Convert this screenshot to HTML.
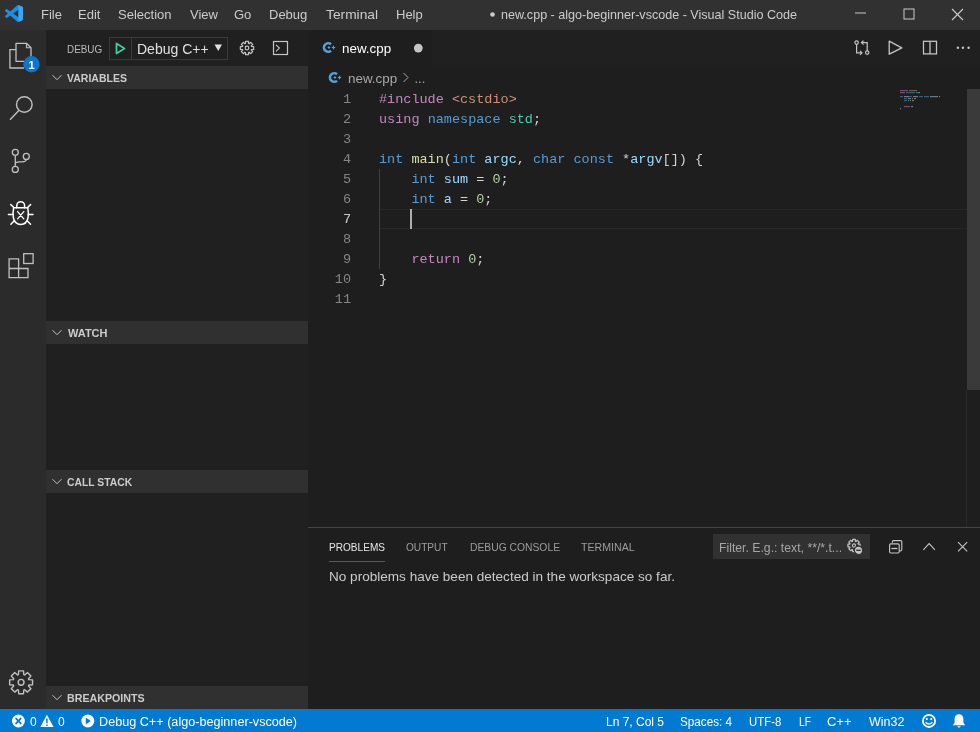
<!DOCTYPE html>
<html><head><meta charset="utf-8">
<style>
*{box-sizing:border-box;margin:0;padding:0}
html,body{width:980px;height:732px;overflow:hidden;background:#1e1e1e;font-family:"Liberation Sans",sans-serif;}
.a{position:absolute}
.t{position:absolute;white-space:pre;line-height:1;transform-origin:0 0}
svg{position:absolute;overflow:visible}
#title{left:0;top:0;width:980px;height:30px;background:#313131;}
.menu{top:8px;font-size:13px;color:#cccccc}
#act{left:0;top:30px;width:46px;height:679px;background:#2b2b2b}
#side{left:46px;top:30px;width:262px;height:679px;background:#202020}
.sechd{position:absolute;left:46px;width:262px;height:23px;background:#303030;}
.sechd .t{left:21px;top:6.5px;font-size:11px;font-weight:bold;color:#cccccc}
#tabs{left:308px;top:30px;width:672px;height:35px;background:#202020}
#tab{left:308px;top:30px;width:124px;height:35px;background:#1e1e1e}
#status{left:0;top:709px;width:980px;height:23px;background:#027ad2}
.st{top:716px;font-size:12px;color:#ffffff}
.code{position:absolute;left:379px;font-family:"Liberation Mono",monospace;font-size:13.5px;line-height:20px;white-space:pre;color:#d4d4d4}
.ln{position:absolute;left:320px;width:31px;text-align:right;font-family:"Liberation Mono",monospace;font-size:13.5px;line-height:20px;color:#858585}
.kw{color:#569cd6}.pp{color:#c586c0}.str{color:#ce9178}.ty{color:#4ec9b0}.fn{color:#dcdcaa}.var{color:#9cdcfe}.num{color:#b5cea8}
.ptab{top:542px;font-size:11px;color:#9d9d9d}
</style></head><body><div style="position:absolute;left:0;top:0;width:980px;height:732px;will-change:transform">
<!-- TITLE BAR -->
<div id="title" class="a"></div>
<svg style="left:5px;top:5px" width="18" height="17" viewBox="0 0 100 100" preserveAspectRatio="none">
<path fill="#1b8fe4" d="M96.46 10.8L75.86.88C73.48-.26 70.62.22 68.75 2.09L29.34 38.04 12.17 25.01c-1.6-1.21-3.84-1.11-5.32.24l-5.51 5.01c-1.82 1.65-1.82 4.51-.01 6.16L16.22 50 1.33 63.58c-1.81 1.65-1.81 4.51.01 6.16l5.51 5.01c1.48 1.35 3.72 1.45 5.32.24l17.17-13.03 39.41 35.95c1.87 1.87 4.73 2.35 7.11 1.21l20.6-9.92c2.16-1.04 3.54-3.23 3.54-5.63V16.43c0-2.4-1.38-4.59-3.54-5.63zM75.02 72.7L45.11 50l29.91-22.7v45.4z"/>
<path fill="#3aa6f2" d="M75.02 0.3 L96.46 10.8 C98.62 11.84 100 14.03 100 16.43 V83.57 C100 85.97 98.62 88.16 96.46 89.2 L75.02 99.7 Z"/>
</svg>
<div class="t menu" style="left:41px">File</div>
<div class="t menu" style="left:78px">Edit</div>
<div class="t menu" style="left:118px">Selection</div>
<div class="t menu" style="left:190px;">View</div>
<div class="t menu" style="left:234px">Go</div>
<div class="t menu" style="left:269px">Debug</div>
<div class="t menu" style="left:326px;transform:scaleX(1.06)">Terminal</div>
<div class="t menu" style="left:396px">Help</div>
<svg style="left:490px;top:12px" width="5" height="5"><circle cx="2.5" cy="2.5" r="2.3" fill="#cccccc"/></svg>
<div class="t menu" style="left:501px;font-size:13px;transform:scaleX(0.967)">new.cpp - algo-beginner-vscode - Visual Studio Code</div>
<svg style="left:855px;top:12px" width="12" height="2"><rect x="0" y="0.5" width="11" height="1" fill="#cccccc"/></svg>
<svg style="left:903px;top:8px" width="12" height="12"><rect x="1" y="1" width="10" height="10" fill="none" stroke="#cccccc" stroke-width="1"/></svg>
<svg style="left:951px;top:8px" width="13" height="13"><path d="M1 1L12 12M12 1L1 12" stroke="#cccccc" stroke-width="1.1"/></svg>

<!-- ACTIVITY BAR -->
<div id="act" class="a"></div>
<svg style="left:0;top:30px" width="46" height="260">
 <g fill="none" stroke="#c0c0c0" stroke-width="1.3" stroke-linejoin="round">
  <path d="M16 19.6 H9.9 V38 H24"/>
  <path d="M24 31.3 H16 V13.3 H26.5 L31 17.8 V31"/>
  <path d="M26.5 13.3 V17.8 H31" stroke-width="1.1"/>
 </g>
 <circle cx="31.5" cy="34.3" r="8.2" fill="#0e75cc"/>
 <text x="31.5" y="38.5" text-anchor="middle" font-family="Liberation Sans" font-weight="bold" font-size="11" fill="#ffffff">1</text>
 <g fill="none" stroke="#c0c0c0" stroke-width="1.4">
  <circle cx="24.3" cy="74.5" r="7.8"/>
  <path d="M18.8 80.5 L10 89.8"/>
 </g>
 <g fill="none" stroke="#c0c0c0" stroke-width="1.3">
  <circle cx="15.3" cy="122.3" r="3"/>
  <circle cx="26.3" cy="126.4" r="3"/>
  <circle cx="15.3" cy="139.4" r="3"/>
  <path d="M15.3 125.3 V136.4"/>
  <path d="M15.3 134 C15.3 131.5 18 132.2 22 131.8 C25 131.5 26.3 131 26.3 129.4"/>
 </g>
 <g fill="none" stroke="#ffffff" stroke-width="1.5" stroke-linecap="round">
  <path d="M16.8 177.8 V175.6 A3.9 3.9 0 0 1 24.6 175.6 V177.8"/>
  <path d="M13.6 177.8 H27.8 C28.4 181 28.6 185 28 188 C27.2 191.8 24.5 194.4 20.7 194.4 C16.9 194.4 14.2 191.8 13.4 188 C12.8 185 13 181 13.6 177.8 Z"/>
  <path d="M17.6 181.6 L23.8 188.8 M23.8 181.6 L17.6 188.8" stroke-width="1.3"/>
  <path d="M10.8 174.6 L13.6 177.3 M30.6 174.6 L27.8 177.3"/>
  <path d="M8.4 184.6 H13 M33 184.6 H28.4"/>
  <path d="M10.9 194.2 L14 191 M30.5 194.2 L27.4 191"/>
 </g>
 <g fill="none" stroke="#c0c0c0" stroke-width="1.3">
  <path d="M9.1 228.9 H18.6 V238.5 H28 V247.6 H9.1 Z"/>
  <path d="M9.1 238.5 H18.6 V247.6"/>
  <rect x="23.7" y="223.7" width="9.4" height="9.8"/>
 </g>
</svg>
<svg style="left:0;top:660px" width="46" height="46" viewBox="0 0 46 46">
 <g fill="none" stroke="#c0c0c0" stroke-width="1.4" stroke-linejoin="round">
  <path id="gear" d="M18.43 14.55 L18.67 10.86 L23.53 10.86 L23.77 14.55 L24.69 14.93 L27.47 12.49 L30.91 15.93 L28.47 18.71 L28.85 19.63 L32.54 19.87 L32.54 24.73 L28.85 24.97 L28.47 25.89 L30.91 28.67 L27.47 32.11 L24.69 29.67 L23.77 30.05 L23.53 33.74 L18.67 33.74 L18.43 30.05 L17.51 29.67 L14.73 32.11 L11.29 28.67 L13.73 25.89 L13.35 24.97 L9.66 24.73 L9.66 19.87 L13.35 19.63 L13.73 18.71 L11.29 15.93 L14.73 12.49 L17.51 14.93 Z"/><circle cx="21.1" cy="22.3" r="2.9"/>
 </g>
</svg>

<!-- SIDEBAR -->
<div id="side" class="a"></div>
<div class="t" style="left:67px;top:44px;font-size:11px;color:#bbbbbb;transform:scaleX(0.9)">DEBUG</div>
<div class="a" style="left:109px;top:37px;width:119px;height:23px;border:1px solid #3a3a3a"></div>
<div class="a" style="left:131px;top:38px;width:1px;height:21px;background:#3a3a3a"></div>
<svg style="left:115px;top:42px" width="12" height="14"><path d="M1.5 1.5 L9.5 6.5 L1.5 11.5 Z" fill="none" stroke="#48c9a0" stroke-width="1.8" stroke-linejoin="round"/></svg>
<div class="t" style="left:137px;top:42px;font-size:14px;color:#e0e0e0">Debug C++</div>
<svg style="left:214px;top:44px" width="9" height="8"><path d="M0.5 0.5 H8 L4.25 7 Z" fill="#e0e0e0"/></svg>
<svg style="left:237.5px;top:39px" width="18" height="18"><g fill="none" stroke="#c5c5c5" stroke-width="1.2" stroke-linejoin="round"><path id="gear2" d="M7.47 4.56 L7.59 2.35 L10.41 2.35 L10.53 4.56 L11.06 4.78 L12.70 3.30 L14.70 5.30 L13.22 6.94 L13.44 7.47 L15.65 7.59 L15.65 10.41 L13.44 10.53 L13.22 11.06 L14.70 12.70 L12.70 14.70 L11.06 13.22 L10.53 13.44 L10.41 15.65 L7.59 15.65 L7.47 13.44 L6.94 13.22 L5.30 14.70 L3.30 12.70 L4.78 11.06 L4.56 10.53 L2.35 10.41 L2.35 7.59 L4.56 7.47 L4.78 6.94 L3.30 5.30 L5.30 3.30 L6.94 4.78 Z"/><circle cx="9" cy="9" r="1.8"/></g></svg>
<svg style="left:272px;top:40px" width="17" height="16"><rect x="1.5" y="1.5" width="14" height="13" fill="none" stroke="#c5c5c5" stroke-width="1.2"/><path d="M4 4.8 L7.4 8.1 L4 11.4" fill="none" stroke="#c5c5c5" stroke-width="1.1"/></svg>

<div class="sechd" style="top:66px"><div class="t" style="transform:scaleX(0.955)">VARIABLES</div></div>
<div class="sechd" style="top:321px"><div class="t" style="left:22px">WATCH</div></div>
<div class="sechd" style="top:470px"><div class="t" style="transform:scaleX(0.94)">CALL STACK</div></div>
<div class="sechd" style="top:686px"><div class="t" style="transform:scaleX(0.97)">BREAKPOINTS</div></div>
<svg style="left:50px;top:66px" width="14" height="23"><path d="M2.5 9.2 L7 13.7 L11.5 9.2" fill="none" stroke="#c5c5c5" stroke-width="1"/></svg>
<svg style="left:50px;top:321px" width="14" height="23"><path d="M2.5 9.2 L7 13.7 L11.5 9.2" fill="none" stroke="#c5c5c5" stroke-width="1"/></svg>
<svg style="left:50px;top:470px" width="14" height="23"><path d="M2.5 9.2 L7 13.7 L11.5 9.2" fill="none" stroke="#c5c5c5" stroke-width="1"/></svg>
<svg style="left:50px;top:686px" width="14" height="23"><path d="M2.5 9.2 L7 13.7 L11.5 9.2" fill="none" stroke="#c5c5c5" stroke-width="1"/></svg>

<!-- EDITOR -->
<div id="tabs" class="a"></div>
<div id="tab" class="a"></div>
<svg style="left:322px;top:41px" width="15" height="13" viewBox="0 0 15 13">
 <path d="M9 3.2 A4.3 4.3 0 1 0 9 9.8" fill="none" stroke="#5a9fd6" stroke-width="2.6"/>
 <path d="M5.6 6.5 H8.2 M6.9 5.2 V7.8 M9.8 6.5 H13.2 M11.5 4.8 V8.2" stroke="#5a9fd6" stroke-width="1.2"/>
</svg>
<div class="t" style="left:341.5px;top:42.3px;font-size:13px;color:#ffffff;transform:scaleX(1.03)">new.cpp</div>
<svg style="left:413px;top:43px" width="11" height="11"><circle cx="5.3" cy="5.1" r="4.4" fill="#c5c5c5"/></svg>
<!-- editor actions -->
<svg style="left:854px;top:40px" width="17" height="17" fill="none" stroke="#c5c5c5" stroke-width="1.2">
 <circle cx="2.6" cy="2.6" r="1.7"/>
 <path d="M2.6 4.3 V12.8 H8"/><path d="M6 10.8 L8 12.8 L6 14.8"/>
 <circle cx="13.2" cy="12.6" r="1.7"/>
 <path d="M13.2 10.9 V2.6 H7.5"/><path d="M9.5 0.6 L7.5 2.6 L9.5 4.6"/>
</svg>
<svg style="left:888px;top:40px" width="16" height="16"><path d="M1.2 1.2 L13.8 7.8 L1.2 14.2 Z" fill="none" stroke="#c5c5c5" stroke-width="1.3" stroke-linejoin="round"/></svg>
<svg style="left:922px;top:40px" width="16" height="16"><rect x="1.5" y="1.3" width="13" height="12.6" fill="none" stroke="#c5c5c5" stroke-width="1.25"/><path d="M8 1.3 V13.9" stroke="#c5c5c5" stroke-width="1.3"/></svg>
<svg style="left:955px;top:45px" width="17" height="5"><circle cx="2.9" cy="2.7" r="1.2" fill="#c5c5c5"/><circle cx="7.9" cy="2.7" r="1.2" fill="#c5c5c5"/><circle cx="13.6" cy="2.7" r="1.2" fill="#c5c5c5"/></svg>
<!-- breadcrumbs -->
<svg style="left:328px;top:71px" width="15" height="13" viewBox="0 0 15 13">
 <path d="M9 3.2 A4.3 4.3 0 1 0 9 9.8" fill="none" stroke="#5a9fd6" stroke-width="2.6"/>
 <path d="M5.6 6.5 H8.2 M6.9 5.2 V7.8 M9.8 6.5 H13.2 M11.5 4.8 V8.2" stroke="#5a9fd6" stroke-width="1.2"/>
</svg>
<div class="t" style="left:348px;top:72px;font-size:13px;color:#a9a9a9;transform:scaleX(1.03)">new.cpp</div>
<svg style="left:402px;top:71px" width="8" height="13"><path d="M1.5 2 L6 6.5 L1.5 11" fill="none" stroke="#a9a9a9" stroke-width="1"/></svg>
<div class="t" style="left:414.5px;top:72px;font-size:13px;color:#a9a9a9">...</div>

<!-- code -->
<div class="a" style="left:380px;top:209px;width:587px;height:20px;border-top:1px solid #282828;border-bottom:1px solid #282828"></div>
<div class="a" style="left:379px;top:169px;width:1px;height:100px;background:#404040"></div>
<div class="ln" style="top:90px">1<br>2<br>3<br>4<br>5<br>6<br><span style="color:#c6c6c6">7</span><br>8<br>9<br>10<br>11</div>
<div class="code" style="top:90px"><span class="pp">#include</span> <span class="str">&lt;cstdio&gt;</span>
<span class="pp">using</span> <span class="kw">namespace</span> <span class="ty">std</span>;

<span class="kw">int</span> <span class="fn">main</span>(<span class="kw">int</span> <span class="var">argc</span>, <span class="kw">char</span> <span class="kw">const</span> *<span class="var">argv</span>[]) {
    <span class="kw">int</span> <span class="var">sum</span> = <span class="num">0</span>;
    <span class="kw">int</span> <span class="var">a</span> = <span class="num">0</span>;


    <span class="pp">return</span> <span class="num">0</span>;
}
</div>
<div class="a" style="left:410px;top:209px;width:2px;height:20px;background:#aeafad"></div>
<!-- minimap -->
<svg style="left:900px;top:89.5px" width="60" height="22"><rect x="0" y="0" width="8" height="1.2" fill="#c586c0" opacity="0.5"/><rect x="9" y="0" width="8" height="1.2" fill="#ce9178" opacity="0.5"/><rect x="0" y="2" width="5" height="1.2" fill="#c586c0" opacity="0.5"/><rect x="6" y="2" width="9" height="1.2" fill="#569cd6" opacity="0.5"/><rect x="16" y="2" width="3" height="1.2" fill="#4ec9b0" opacity="0.5"/><rect x="19" y="2" width="1" height="1.2" fill="#d4d4d4" opacity="0.5"/><rect x="0" y="6" width="3" height="1.2" fill="#569cd6" opacity="0.5"/><rect x="4" y="6" width="4" height="1.2" fill="#dcdcaa" opacity="0.5"/><rect x="8" y="6" width="1" height="1.2" fill="#d4d4d4" opacity="0.5"/><rect x="9" y="6" width="3" height="1.2" fill="#569cd6" opacity="0.5"/><rect x="13" y="6" width="4" height="1.2" fill="#9cdcfe" opacity="0.5"/><rect x="17" y="6" width="1" height="1.2" fill="#d4d4d4" opacity="0.5"/><rect x="19" y="6" width="4" height="1.2" fill="#569cd6" opacity="0.5"/><rect x="24" y="6" width="5" height="1.2" fill="#569cd6" opacity="0.5"/><rect x="30" y="6" width="1" height="1.2" fill="#d4d4d4" opacity="0.5"/><rect x="31" y="6" width="4" height="1.2" fill="#9cdcfe" opacity="0.5"/><rect x="35" y="6" width="3" height="1.2" fill="#d4d4d4" opacity="0.5"/><rect x="39" y="6" width="1" height="1.2" fill="#d4d4d4" opacity="0.5"/><rect x="4" y="8" width="3" height="1.2" fill="#569cd6" opacity="0.5"/><rect x="8" y="8" width="3" height="1.2" fill="#9cdcfe" opacity="0.5"/><rect x="12" y="8" width="1" height="1.2" fill="#d4d4d4" opacity="0.5"/><rect x="14" y="8" width="1" height="1.2" fill="#b5cea8" opacity="0.5"/><rect x="15" y="8" width="1" height="1.2" fill="#d4d4d4" opacity="0.5"/><rect x="4" y="10" width="3" height="1.2" fill="#569cd6" opacity="0.5"/><rect x="8" y="10" width="1" height="1.2" fill="#9cdcfe" opacity="0.5"/><rect x="10" y="10" width="1" height="1.2" fill="#d4d4d4" opacity="0.5"/><rect x="12" y="10" width="1" height="1.2" fill="#b5cea8" opacity="0.5"/><rect x="13" y="10" width="1" height="1.2" fill="#d4d4d4" opacity="0.5"/><rect x="4" y="16" width="6" height="1.2" fill="#c586c0" opacity="0.5"/><rect x="11" y="16" width="1" height="1.2" fill="#b5cea8" opacity="0.5"/><rect x="12" y="16" width="1" height="1.2" fill="#d4d4d4" opacity="0.5"/><rect x="0" y="18" width="1" height="1.2" fill="#d4d4d4" opacity="0.5"/></svg>
<!-- scrollbar -->
<div class="a" style="left:967px;top:89px;width:13px;height:301px;background:#3a3a3a"></div>
<div class="a" style="left:966px;top:390px;width:1px;height:137px;background:#2a2a2a"></div>

<!-- PANEL -->
<div class="a" style="left:308px;top:527px;width:672px;height:1px;background:#454545"></div>
<div class="t ptab" style="left:329px;color:#e7e7e7;transform:scaleX(0.916)">PROBLEMS</div>
<div class="a" style="left:329px;top:561px;width:56px;height:1px;background:#5a5a5a"></div>
<div class="t ptab" style="left:406px;transform:scaleX(0.92)">OUTPUT</div>
<div class="t ptab" style="left:470px;transform:scaleX(0.938)">DEBUG CONSOLE</div>
<div class="t ptab" style="left:581px;transform:scaleX(0.965)">TERMINAL</div>
<div class="a" style="left:713px;top:534px;width:157px;height:25px;background:#313131"></div>
<div class="t" style="left:718.5px;top:541px;font-size:13px;color:#a6a6a6;transform:scaleX(0.941)">Filter. E.g.: text, **/*.t...</div>
<svg style="left:847px;top:539px" width="17" height="16"><path d="M5.57 2.34 L5.71 0.44 L8.29 0.44 L8.43 2.34 L8.93 2.55 L10.38 1.30 L12.20 3.12 L10.95 4.57 L11.16 5.07 L13.06 5.21 L13.06 7.79 L11.16 7.93 L10.95 8.43 L12.20 9.88 L10.38 11.70 L8.93 10.45 L8.43 10.66 L8.29 12.56 L5.71 12.56 L5.57 10.66 L5.07 10.45 L3.62 11.70 L1.80 9.88 L3.05 8.43 L2.84 7.93 L0.94 7.79 L0.94 5.21 L2.84 5.07 L3.05 4.57 L1.80 3.12 L3.62 1.30 L5.07 2.55 Z" fill="none" stroke="#c5c5c5" stroke-width="1.2" stroke-linejoin="round"/><circle cx="7" cy="6.5" r="1.6" fill="none" stroke="#c5c5c5" stroke-width="1.1"/><circle cx="11.5" cy="11.3" r="4.2" fill="#c5c5c5" stroke="#313131" stroke-width="1.2"/><path d="M9.3 11.3 H13.7" stroke="#313131" stroke-width="1.4"/></svg>
<div class="t" style="left:329px;top:570px;font-size:13px;color:#cccccc;transform:scaleX(1.043)">No problems have been detected in the workspace so far.</div>
<svg style="left:887px;top:539px" width="16" height="16" fill="none" stroke="#c5c5c5" stroke-width="1.15"><path d="M5.4 3.7 V2.6 Q5.4 1.6 6.4 1.6 H13.8 Q14.8 1.6 14.8 2.6 V10.6 Q14.8 11.8 13.6 11.8 H12.6"/><rect x="2.6" y="4.8" width="9.6" height="9.2" rx="1.2"/><path d="M4.4 9.5 H10.4" stroke-width="1.3"/></svg>
<svg style="left:921px;top:541px" width="16" height="12"><path d="M2.3 8.8 L8.1 2.6 L13.9 8.8" fill="none" stroke="#c5c5c5" stroke-width="1.1"/></svg>
<svg style="left:955px;top:540px" width="14" height="14"><path d="M3 2.2 L12.2 11.4 M12.2 2.2 L3 11.4" fill="none" stroke="#c5c5c5" stroke-width="1.1"/></svg>

<!-- STATUS BAR -->
<div id="status" class="a"></div>
<svg style="left:11px;top:714px" width="15" height="15"><circle cx="7.4" cy="7" r="6.4" fill="#ffffff"/><path d="M4.6 4.2 L10.2 9.8 M10.2 4.2 L4.6 9.8" stroke="#027ad2" stroke-width="1.7"/></svg>
<div class="t st" style="left:30px">0</div>
<svg style="left:40px;top:714px" width="15" height="14"><path d="M6.9 0.8 L13.6 13 H0.4 Z" fill="#ffffff"/><path d="M6.9 4.6 V9.3 M6.9 10.5 V12" stroke="#027ad2" stroke-width="1.5"/></svg>
<div class="t st" style="left:58px">0</div>
<svg style="left:80px;top:714px" width="15" height="15"><circle cx="7.8" cy="7" r="6.5" fill="#ffffff"/><path d="M5.8 3.6 L10.8 7 L5.8 10.4 Z" fill="#027ad2"/></svg>
<div class="t st" style="left:99px;transform:scaleX(1.053)">Debug C++ (algo-beginner-vscode)</div>
<div class="t st" style="left:606px">Ln 7, Col 5</div>
<div class="t st" style="left:680px;transform:scaleX(0.974)">Spaces: 4</div>
<div class="t st" style="left:749px;transform:scaleX(0.95)">UTF-8</div>
<div class="t st" style="left:799px;transform:scaleX(0.85)">LF</div>
<div class="t st" style="left:827px;transform:scaleX(1.08)">C++</div>
<div class="t st" style="left:869px;transform:scaleX(1.04)">Win32</div>
<svg style="left:921px;top:713px" width="16" height="16"><circle cx="8" cy="7.9" r="6.1" fill="none" stroke="#ffffff" stroke-width="1.8"/><circle cx="5.8" cy="6.1" r="1.1" fill="#ffffff"/><circle cx="10.2" cy="6.1" r="1.1" fill="#ffffff"/><path d="M4.6 9.2 Q8 12.8 11.4 9.2" fill="none" stroke="#ffffff" stroke-width="1.3"/></svg>
<svg style="left:951px;top:713px" width="16" height="16"><path d="M8 1.2 C4.8 1.2 3.6 3.6 3.6 6.3 V9.8 L1.8 12.2 H14.2 L12.4 9.8 V6.3 C12.4 3.6 11.2 1.2 8 1.2 Z" fill="#ffffff"/><path d="M6.3 13.2 A1.8 1.8 0 0 0 9.7 13.2 Z" fill="#ffffff"/></svg>
</div></body></html>
